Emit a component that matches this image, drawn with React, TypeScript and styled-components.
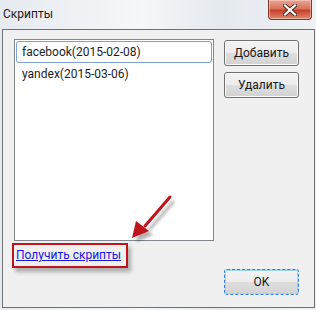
import styled, { createGlobalStyle } from "styled-components";

const GlobalStyle = createGlobalStyle`
    html, body {
        margin: 0;
        padding: 0;
        background: #ffffff;
    }
    body {
        font-family: "Segoe UI", Roboto, "Noto Sans", "Liberation Sans", sans-serif;
        font-size: 12px;
    }
`;

const StyledWindow = styled.div`
    position: relative;
    display: flex;
    flex-direction: column;
    width: 316px;
    height: 310px;
    background: linear-gradient(90deg, #e6ebf0 0%, #f5f7f9 45%, #e4e9ee 70%, #eff2f5 100%);
    overflow: hidden;
`;

const StyledTitleBar = styled.div`
    display: flex;
    justify-content: space-between;
    align-items: flex-start;
    height: 29px;
    padding: 0 3px 0 3px;
`;

const StyledTitle = styled.div`
    margin-top: 7px;
    color: #1a1a1a;
    font-size: 12px;
`;

const StyledCloseBtn = styled.div`
    display: flex;
    align-items: center;
    justify-content: center;
    width: 44px;
    height: 20px;
    margin-right: 1px;
    border: 1px solid #7a3a30;
    border-top: none;
    border-radius: 0 0 4px 4px;
    box-sizing: border-box;
    background: linear-gradient(180deg, #eaa696 0%, #d8735c 45%, #c8402a 55%, #dd8a72 100%);
    box-shadow: inset 0 0 0 1px rgba(255, 220, 210, 0.5);
`;

const StyledClient = styled.div`
    flex: 1;
    display: flex;
    gap: 10px;
    margin: 0 1px 2px 2px;
    padding: 9px 15px 12px 11px;
    border: 1px solid #707070;
    background: #f0f0f0;
`;

const StyledLeft = styled.div`
    display: flex;
    flex-direction: column;
`;

const StyledListBox = styled.ul`
    width: 200px;
    height: 202px;
    margin: 0;
    padding: 1px 1px;
    list-style: none;
    box-sizing: border-box;
    border: 1px solid #828790;
    background: #ffffff;
`;

const StyledListItem = styled.li<{ $selected?: boolean }>`
    display: flex;
    align-items: center;
    height: 22px;
    padding-left: 5px;
    box-sizing: border-box;
    color: #1e1e1e;
    font-size: 12px;
    border: 1px solid ${(p) => (p.$selected ? "#7da2ce" : "transparent")};
    border-radius: 3px;
`;

const StyledLinkRow = styled.div`
    position: relative;
    padding: 7px 0 0 2px;
`;

const StyledLink = styled.a`
    color: #1515e6;
    text-decoration: underline;
    font-size: 12px;
    cursor: pointer;
`;

const StyledHighlight = styled.div`
    position: absolute;
    left: -2px;
    top: 2px;
    width: 116px;
    height: 25px;
    box-sizing: border-box;
    border: 2px solid #c0141c;
    box-shadow: 3px 4px 4px rgba(0, 0, 0, 0.28);
`;

const StyledRight = styled.div`
    display: flex;
    flex-direction: column;
    gap: 6px;
    padding-top: 1px;
`;

const StyledButton = styled.button<{ $focused?: boolean }>`
    width: 75px;
    height: 26px;
    padding: 0;
    font-family: inherit;
    font-size: 12px;
    color: #1a1a1a;
    border: 1px ${(p) => (p.$focused ? "dashed #2a7fe0" : "solid #707070")};
    border-radius: 3px;
    background: linear-gradient(180deg, #f4f4f4 0%, #ececec 48%, #dedede 52%, #d2d2d2 100%);
    box-shadow: inset 0 0 0 1px ${(p) => (p.$focused ? "#9fd6f5" : "#fbfbfb")};
    &:last-child {
        margin-top: auto;
    }
`;

const StyledArrow = styled.svg`
    position: absolute;
    left: 125px;
    top: 190px;
    overflow: visible;
`;

function App() {
    return (
        <>
            <GlobalStyle />
            <StyledWindow>
                <StyledTitleBar>
                    <StyledTitle>Скрипты</StyledTitle>
                    <StyledCloseBtn>
                        <svg width="14" height="12" viewBox="0 0 14 12">
                            <path d="M2 1.5 L12 10.5 M12 1.5 L2 10.5" stroke="#4a2a25" strokeWidth="4" strokeLinecap="square" />
                            <path d="M2 1.5 L12 10.5 M12 1.5 L2 10.5" stroke="#ffffff" strokeWidth="2.2" strokeLinecap="square" />
                        </svg>
                    </StyledCloseBtn>
                </StyledTitleBar>
                <StyledClient>
                    <StyledLeft>
                        <StyledListBox>
                            <StyledListItem $selected>facebook(2015-02-08)</StyledListItem>
                            <StyledListItem>yandex(2015-03-06)</StyledListItem>
                        </StyledListBox>
                        <StyledLinkRow>
                            <StyledLink>Получить скрипты</StyledLink>
                            <StyledHighlight />
                        </StyledLinkRow>
                    </StyledLeft>
                    <StyledRight>
                        <StyledButton>Добавить</StyledButton>
                        <StyledButton>Удалить</StyledButton>
                        <StyledButton $focused>OK</StyledButton>
                    </StyledRight>
                </StyledClient>
                <StyledArrow width="50" height="55" viewBox="0 0 50 55">
                    <defs>
                        <filter id="arrowShadow" x="-50%" y="-50%" width="200%" height="200%">
                            <feGaussianBlur stdDeviation="1.5" />
                        </filter>
                    </defs>
                    <g transform="translate(4 4)" fill="#000" opacity="0.3" filter="url(#arrowShadow)">
                        <path d="M45 7 L20 36" stroke="#000" strokeWidth="3" />
                        <path d="M7 48 L11 31 L24 41 Z" />
                    </g>
                    <path d="M45 7 L20 36" stroke="#c0141c" strokeWidth="3" strokeLinecap="round" />
                    <path d="M7 48 L11 31 L24 41 Z" fill="#c0141c" />
                </StyledArrow>
            </StyledWindow>
        </>
    );
}

export default App;
